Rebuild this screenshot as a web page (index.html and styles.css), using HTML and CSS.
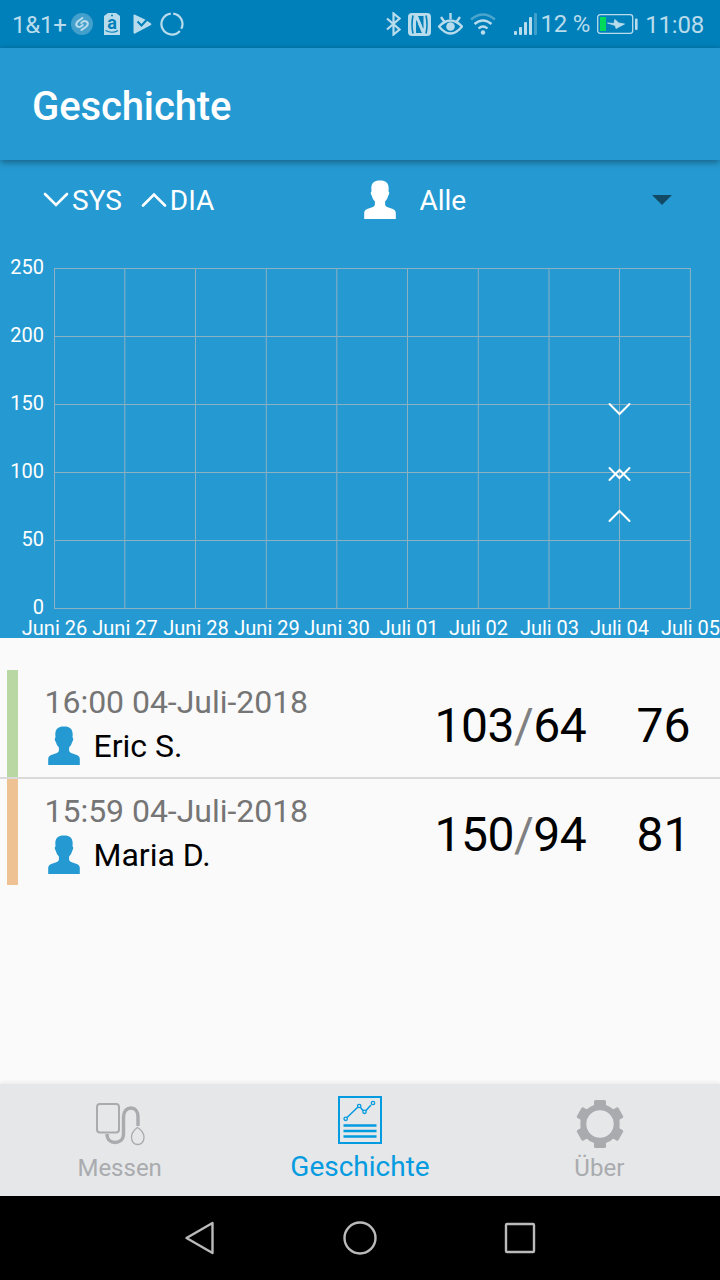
FILE: index.html
```
<!DOCTYPE html>
<html lang="de">
<head>
<meta charset="UTF-8">
<meta name="viewport" content="width=device-width, initial-scale=1">
<title>Geschichte</title>
<link rel="stylesheet" href="styles.css">
</head>
<body>

<svg class="defs" width="0" height="0">
  <symbol id="person" viewBox="0 0 32 40">
    <path d="M16 .5C21 .3 24.500 2.500 24.700 8l-.2 3.500c1.200.3.8 3-.4 4.500-.6 2.500-1.600 4-3 5.500v3.500c1 2.300 4 2.600 7 3.700 2.700 1 3.700 2.300 3.700 4.300v6H.2v-6c0-2 1-3.300 3.700-4.300 3-1.100 6-1.400 7-3.700v-3.500c-1.400-1.500-2.400-3-3-5.500C6.700 14.500 6.300 11.800 7.500 11.500L7.300 8C7.500 2.500 11 .3 16 .5z"/>
  </symbol>
</svg>

<div class="status-bar">
  <div class="status-left">
    <span class="carrier">1&amp;1+</span>
    <svg class="ic-shazam" width="22" height="22" viewBox="0 0 22 22">
      <circle cx="11" cy="11" r="11" fill="#439fcb"/>
      <path d="M11.500 5L7 8.200q-3.300 3-.6 5.200 2 1.300 3.800-.2l1.500-1.200M10.500 17l4.500-3.200q3.300-3 .6-5.200-2-1.300-3.800.2L10.300 10" fill="none" stroke="#b9dcec" stroke-width="2.100" stroke-linecap="round"/>
    </svg>
    <svg class="ic-tag" width="16" height="22" viewBox="0 0 16 22">
      <path d="M4 0h8l4 3v19H0V3z" fill="#b9dcec"/>
      <circle cx="8" cy="2.500" r="1" fill="#0080ba"/>
      <text x="8" y="15.500" class="tag-letter">a</text>
      <path d="M1.500 17.500q6.500 3.500 12.500 0" fill="none" stroke="#0080ba" stroke-width="1.200"/>
    </svg>
    <svg class="ic-play" width="19" height="20" viewBox="0 0 19 20">
      <path d="M1.500.5L12 5.500 18 9.500q.8.800 0 1.500L2 19.500q-1.500.5-1.500-1V1.500q0-1.300 1-1z" fill="#b9dcec"/>
      <path d="M4.500 7.500L8.500 11.500 15 4.500" fill="none" stroke="#0080ba" stroke-width="2"/>
    </svg>
    <svg class="ic-ring" width="24" height="24" viewBox="0 0 24 24">
      <g fill="none" stroke="#b9dcec" stroke-width="2.200">
        <path d="M13.200 1.600A10.500 10.500 0 0 1 21.300 16.800"/>
        <path d="M19.800 19A10.500 10.500 0 1 1 10.800 1.600"/>
      </g>
    </svg>
  </div>
  <div class="status-right">
    <svg class="ic-bt" width="15" height="24" viewBox="0 0 15 24">
      <path d="M1 6.500l12.500 11L7.500 22.500V1.500l6 5L1 17.500" fill="none" stroke="#b9dcec" stroke-width="2.200"/>
    </svg>
    <svg class="ic-nfc" width="23" height="23" viewBox="0 0 23 23">
      <rect width="23" height="23" rx="4" fill="#b9dcec"/>
      <path d="M5 2.500q-2 9 0 18M18 2.500q2 9 0 18" fill="none" stroke="#0080ba" stroke-width="1.600"/>
      <path d="M9 7.500V20M14.500 3v12.500" fill="none" stroke="#0080ba" stroke-width="1.600"/>
      <path d="M8.200 7l6 13H8.200zM9.500 3h5.800v12.500z" fill="#0080ba"/>
      <path d="M8.500 3l6.500 16" fill="none" stroke="#b9dcec" stroke-width="2.800"/>
    </svg>
    <svg class="ic-eye" width="25" height="22" viewBox="0 0 25 22">
      <path d="M1 13.500Q12.500 1.500 24 13.500 12.500 27.500 1 13.500zM12.500 0v6M3 4l3.500 5M22 4l-3.500 5" fill="none" stroke="#b9dcec" stroke-width="2.300"/>
      <circle cx="12.500" cy="13.500" r="4.300" fill="#b9dcec"/>
    </svg>
    <svg class="ic-wifi" width="26" height="22" viewBox="0 0 26 22">
      <g fill="none" stroke="#b9dcec" stroke-width="2.300">
        <path d="M1 6.500q12-10 24 0" opacity=".4"/>
        <path d="M4.500 11q8.500-7 17 0"/>
        <path d="M8.500 15.500q4.500-4 9 0"/>
      </g>
      <circle cx="13" cy="19.500" r="2.200" fill="#b9dcec"/>
    </svg>
    <svg class="ic-signal" width="23" height="22" viewBox="0 0 23 22">
      <g fill="#b9dcec">
        <rect x="0" y="18" width="3" height="4" rx="1"/>
        <rect x="5" y="14" width="3" height="8" rx="1"/>
        <rect x="10" y="9" width="3" height="13" rx="1"/>
        <rect x="15" y="4" width="3" height="18" rx="1"/>
        <rect x="20" y="0" width="3" height="22" rx="1" opacity=".35"/>
      </g>
    </svg>
    <span class="percent">12 %</span>
    <svg class="ic-battery" width="41" height="20" viewBox="0 0 41 20">
      <rect x=".7" y=".7" width="35" height="18.600" rx="2.500" fill="none" stroke="#b9dcec" stroke-width="1.300"/>
      <rect x="38" y="4.500" width="2.600" height="11.500" rx="1" fill="#b9dcec"/>
      <rect x="3" y="3" width="6" height="14" fill="#00d95a"/>
      <path d="M10.500 9l6.500.5.800-4 4 3.500 5.700 1-8.500 4.500-.8-3z" fill="#b9dcec" stroke="#b9dcec" stroke-width=".8"/>
    </svg>
    <span class="clock">11:08</span>
  </div>
</div>

<header class="app-bar">
  <h1>Geschichte</h1>
</header>

<section class="chart-panel">
  <div class="filters">
    <div class="legend">
      <svg width="26" height="16" viewBox="0 0 26 16"><path d="M2 2l11 11L24 2"/></svg>
      <span>SYS</span>
    </div>
    <div class="legend legend-dia">
      <svg width="26" height="16" viewBox="0 0 26 16"><path d="M2 13.500l11-11 11 11"/></svg>
      <span>DIA</span>
    </div>
    <div class="user-select">
      <svg class="person" width="32" height="40"><use href="#person"/></svg>
      <span>Alle</span>
      <svg class="caret" width="20" height="10" viewBox="0 0 20 10"><path d="M0 0h20L10 10z"/></svg>
    </div>
  </div>

  <svg class="chart" width="720" height="398" viewBox="0 240 720 398">
    <path class="grid" d="M54 268.500H690M54 336.500H690M54 404.500H690M54 472.500H690M54 540.500H690M54 608.500H690M54.500 268V609M124.800 268V609M195.500 268V609M266.300 268V609M336.800 268V609M407.500 268V609M478.300 268V609M549 268V609M619.500 268V609M690.400 268V609"/>
    <g class="y-labels">
      <text x="44" y="274">250</text>
      <text x="44" y="342">200</text>
      <text x="44" y="410">150</text>
      <text x="44" y="478">100</text>
      <text x="44" y="546">50</text>
      <text x="44" y="614">0</text>
    </g>
    <g class="x-labels">
      <text x="54.500" y="635">Juni 26</text>
      <text x="125" y="635">Juni 27</text>
      <text x="196" y="635">Juni 28</text>
      <text x="267" y="635">Juni 29</text>
      <text x="337" y="635">Juni 30</text>
      <text x="409" y="635">Juli 01</text>
      <text x="478.500" y="635">Juli 02</text>
      <text x="549.500" y="635">Juli 03</text>
      <text x="619.500" y="635">Juli 04</text>
      <text x="690.500" y="635">Juli 05</text>
    </g>
    <g class="points">
      <path d="M609.500 404l10 10 10-10"/>
      <path d="M609.500 468l10 10 10-10"/>
      <path d="M609.500 480l10-10 10 10"/>
      <path d="M609.500 521l10-10 10 10"/>
    </g>
  </svg>
</section>

<main class="list">
  <div class="entry">
    <div class="stripe ok"></div>
    <div class="info">
      <div class="date">16:00 04-Juli-2018</div>
      <div class="name">
        <svg class="person" width="32" height="40"><use href="#person"/></svg>
        <span>Eric S.</span>
      </div>
    </div>
    <div class="pressure">103<span class="slash">/</span>64</div>
    <div class="pulse">76</div>
  </div>
  <div class="entry">
    <div class="stripe high"></div>
    <div class="info">
      <div class="date">15:59 04-Juli-2018</div>
      <div class="name">
        <svg class="person" width="32" height="40"><use href="#person"/></svg>
        <span>Maria D.</span>
      </div>
    </div>
    <div class="pressure">150<span class="slash">/</span>94</div>
    <div class="pulse">81</div>
  </div>
</main>

<nav class="tabs">
  <a class="tab">
    <svg width="50" height="48" viewBox="0 0 50 48">
      <g fill="none" stroke="#a9abae">
        <rect x="2" y="4" width="22" height="28.500" rx="3" stroke-width="2"/>
        <path d="M12 34c0 6 4 8.500 8 8.500s8.500-2.500 8.500-8.500V17c0-6 3.500-9 7.500-9s7 3 7 9v9" stroke-width="3.400"/>
        <path d="M42.500 27.500c-2 1.500-6 4-6 10 0 4.500 3 7 6.200 7s6.300-2.500 6.300-7c0-6-4.300-8.500-6.500-10z" stroke-width="1.300"/>
      </g>
    </svg>
    <span>Messen</span>
  </a>
  <a class="tab active">
    <svg width="44" height="48" viewBox="0 0 44 48">
      <g fill="none" stroke="#049be0">
        <rect x="1" y="1" width="42" height="46" stroke-width="2"/>
        <path d="M5.500 29.500h33M5.500 35h33M5.500 40.500h33" stroke-width="2.300"/>
        <path d="M9 21.500L20 11M22.500 11.500l2.500 3M28 14.500l5-5.500" stroke-width="1.500"/>
        <circle cx="7.700" cy="22.800" r="1.700" stroke-width="1.300"/>
        <circle cx="21.200" cy="10" r="1.700" stroke-width="1.300"/>
        <circle cx="26.500" cy="15.800" r="1.700" stroke-width="1.300"/>
        <circle cx="35" cy="7" r="1.700" stroke-width="1.300"/>
      </g>
    </svg>
    <span>Geschichte</span>
  </a>
  <a class="tab">
    <svg class="gear" width="48" height="48" viewBox="-24 -24 48 48">
      <g fill="#a9abae">
        <path id="tooth" d="M-7.500-17L-6-19v-3.500q0-1.500 1.500-1.500h9Q6-24 6-22.500v3.500l1.500 2z"/>
        <use href="#tooth" transform="rotate(60)"/>
        <use href="#tooth" transform="rotate(120)"/>
        <use href="#tooth" transform="rotate(180)"/>
        <use href="#tooth" transform="rotate(240)"/>
        <use href="#tooth" transform="rotate(300)"/>
      </g>
      <circle r="16.700" fill="#e6e7e9" stroke="#a9abae" stroke-width="6"/>
    </svg>
    <span>Über</span>
  </a>
</nav>

<div class="nav-bar">
  <svg width="36" height="36" viewBox="0 0 36 36"><path d="M30.500 3v30L4.500 18z"/></svg>
  <svg width="36" height="36" viewBox="0 0 36 36"><circle cx="18" cy="18" r="15.500"/></svg>
  <svg width="36" height="36" viewBox="0 0 36 36"><rect x="4" y="4" width="28" height="28" rx="1"/></svg>
</div>

</body>
</html>
```
FILE: styles.css
```
* {
  box-sizing: border-box;
}
body {
  margin: 0;
  width: 720px;
  height: 1280px;
  display: flex;
  flex-direction: column;
  overflow: hidden;
  font-family: Roboto, sans-serif;
  background-color: #fafafa;
  color: #000;
}
svg {
  display: block;
  flex: none;
}
.defs {
  position: absolute;
}

/* status bar */
.status-bar {
  height: 48px;
  flex: none;
  display: flex;
  justify-content: space-between;
  padding: 0 16px 0 12px;
  background-color: #0080ba;
  color: #b9dcec;
  font-size: 24px;
  line-height: 28px;
  letter-spacing: -0.2px;
}
.status-left, .status-right {
  display: flex;
  align-items: center;
  white-space: nowrap;
}
.carrier, .clock {
  padding-top: 2px;
}
.carrier {
  width: 59px;
}
.ic-tag {
  margin-left: 11px;
}
.tag-letter {
  font-size: 18px;
  font-weight: bold;
  text-anchor: middle;
  fill: #0080ba;
}
.ic-play {
  margin-left: 13px;
}
.ic-ring {
  margin-left: 8px;
}
.ic-nfc {
  margin-left: 7px;
}
.ic-eye {
  margin-left: 7px;
}
.ic-wifi {
  margin-left: 7px;
}
.ic-signal {
  margin-left: 18px;
}
.percent {
  margin-left: 4px;
  padding-bottom: 1px;
}
.ic-battery {
  margin-left: 7px;
}
.clock {
  margin-left: 7px;
}

/* app bar */
.app-bar {
  height: 112px;
  flex: none;
  display: flex;
  align-items: center;
  padding: 4px 32px 0;
  background-color: #259ad2;
  box-shadow: 0 2px 7px rgba(0,0,0,0.4);
  z-index: 1;
}
.app-bar h1 {
  margin: 0;
  font-size: 40px;
  font-weight: 500;
  letter-spacing: -0.1px;
  color: #fff;
}

/* chart */
.chart-panel {
  height: 478px;
  flex: none;
  background-color: #259ad2;
  color: #fff;
}
.filters {
  height: 80px;
  display: flex;
  align-items: center;
  padding: 0 48px 0 43px;
  font-size: 28px;
}
.legend {
  display: flex;
  align-items: center;
  gap: 3px;
}
.legend path, .points {
  fill: none;
  stroke: #fff;
  stroke-width: 2;
  stroke-linecap: round;
}
.legend path {
  stroke-width: 2.6;
}
.legend-dia {
  margin-left: 19px;
}
.user-select {
  display: flex;
  align-items: center;
  flex: 1;
  margin-left: 150px;
}
.user-select .person {
  fill: #fff;
  margin-right: 23px;
}
.caret {
  margin-left: auto;
  fill: #124a66;
}
.chart {
  overflow: visible;
}
.grid {
  fill: none;
  stroke: #8db0c2;
  stroke-width: 1;
}
.y-labels, .x-labels {
  font-size: 20px;
  fill: #fff;
}
.y-labels {
  text-anchor: end;
}
.x-labels {
  text-anchor: middle;
}

/* measurements */
.list {
  flex: 1;
  padding-top: 32px;
}
.entry {
  height: 107px;
  display: flex;
  align-items: center;
  padding-left: 7px;
}
.entry + .entry {
  height: 108px;
  border-top: 2px solid #dadada;
}
.stripe {
  width: 10.5px;
  align-self: stretch;
  margin-right: 27px;
}
.ok {
  background-color: #b9d7a3;
}
.high {
  background-color: #eec293;
}
.info {
  width: 390px;
  align-self: flex-start;
  padding-top: 13px;
}
.date {
  font-size: 32px;
  line-height: 38px;
  letter-spacing: -0.03px;
  color: #757575;
}
.name {
  display: flex;
  align-items: center;
  gap: 14px;
  margin-top: 5px;
  font-size: 32px;
}
.name .person {
  fill: #259ad2;
  margin-left: 3px;
}
.pressure, .pulse {
  padding-top: 4px;
  font-size: 48px;
}
.pressure {
  width: 202px;
  letter-spacing: -0.5px;
}
.slash {
  color: #808080;
}

/* bottom tabs */
.tabs {
  height: 112px;
  flex: none;
  display: flex;
  background-color: #e6e7e9;
  box-shadow: 0 -1px 5px rgba(0,0,0,0.08);
}
.tab {
  flex: 1;
  display: flex;
  flex-direction: column;
  align-items: center;
  padding: 16px 1px 0 0;
  font-size: 24px;
  line-height: 28px;
  color: #a9abae;
}
.tab span {
  margin-top: 6px;
}
.gear {
  margin-left: 1px;
}
.tab.active {
  padding: 12px 0 0;
  font-size: 28px;
  line-height: 32px;
  color: #049be0;
}
.tab.active span {
  margin-top: 7px;
}

/* system buttons */
.nav-bar {
  height: 84px;
  flex: none;
  display: flex;
  justify-content: center;
  align-items: center;
  gap: 124px;
  background-color: #000;
}
.nav-bar svg {
  fill: none;
  stroke: #bababa;
  stroke-width: 2.4;
  stroke-linejoin: round;
}
```
